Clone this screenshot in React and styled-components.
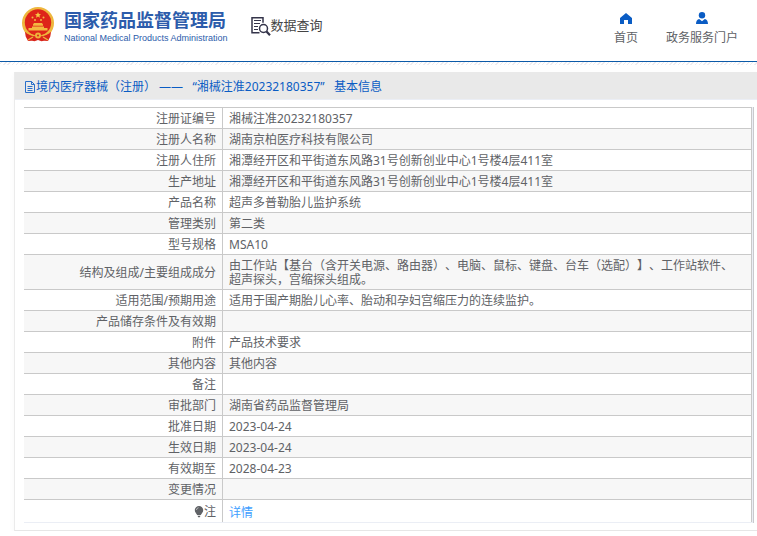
import React from "react";
import styled, { createGlobalStyle } from "styled-components";

const GlobalStyle = createGlobalStyle`
  body {
    margin: 0;
    background: #fff;
    color: #606266;
    font-family: "Noto Sans", "Noto Sans CJK SC", sans-serif;
    font-size: 12px;
    line-height: 14px;
    text-spacing-trim: space-all;
  }

  a {
    color: inherit;
    text-decoration: none;
  }
`;

const Header = styled.header`
  display: flex;
  align-items: flex-start;
  height: 61px;
  padding: 0 19px 0 22px;
  border-bottom: 1px solid #0c5aa8;
`;

const Hatch = styled.div`
  height: 3px;
  background: repeating-linear-gradient(
    135deg,
    #fff 0 1px,
    #eeecf0 1px 2px,
    #fff 2px 3px
  );
`;

const Brand = styled.a`
  display: flex;
  gap: 10px;
  padding-top: 7px;
  color: #2c5cab;
`;

const BrandText = styled.span`
  display: flex;
  flex-direction: column;
  padding-top: 2px;
`;

const BrandName = styled.strong`
  font-size: 18px;
  line-height: 22px;
  font-weight: 700;
`;

const BrandEnglish = styled.span`
  font-family: "Liberation Sans", sans-serif;
  font-size: 9px;
  line-height: 14px;
`;

const QueryLink = styled.a`
  display: flex;
  margin-left: 23px;
  padding-top: 16px;
  color: #444;
  font-size: 13px;
  line-height: 18px;
`;

const Nav = styled.nav`
  display: flex;
  gap: 28px;
  margin-left: auto;
  padding-top: 12px;
`;

const NavLink = styled.a`
  display: flex;
  flex-direction: column;
  align-items: center;
  gap: 6px;

  svg {
    fill: #0a5cc4;
  }
`;

const Panel = styled.main`
  margin: 7px 0 0 14px;
  border-left: 1px solid #ebebeb;
  border-bottom: 1px solid #e6e6e6;
  box-shadow: 0 2px 6px rgba(0, 0, 0, 0.03);
`;

const Title = styled.h1`
  display: flex;
  align-items: center;
  height: 25px;
  margin: 0;
  padding: 2px 10px 0;
  border-bottom: 1px solid #ebeef5;
  background: #e9e9e9;
  color: #0a5cc4;
  font-size: 12px;
  font-weight: 400;
  white-space: pre;
`;

const TableFrame = styled.div`
  margin: 7px 3px 7px 9px;
  padding-right: 1px;
  border-right: 1px solid #c9c9cd;
  background: #ebeef5;
`;

const Table = styled.table`
  width: 100%;
  border-spacing: 0;
  border-bottom: 1px solid #ebeef5;
  background: #fff;
  table-layout: fixed;
`;

const Row = styled.tr`
  &:nth-child(even) {
    background: #f7f7f7;
  }
`;

const Label = styled.th`
  width: 192px;
  height: 14px;
  padding: 4px 6px 2px 0;
  border-top: 1px solid #c9c9c9;
  border-right: 1px solid #c9c9c9;
  font-weight: 400;
  text-align: right;
`;

const Value = styled.td`
  padding: 4px 10px 2px 6px;
  border-top: 1px solid #c9c9c9;
  border-right: 1px solid #c9c9c9;
`;

const NoteLabel = styled.span`
  display: flex;
  align-items: center;
  justify-content: flex-end;
  height: 16px;
`;

const DetailLink = styled.a`
  display: block;
  padding-top: 2px;
  color: #409eff;
`;

const rows = [
  ["注册证编号", "湘械注准20232180357"],
  ["注册人名称", "湖南京柏医疗科技有限公司"],
  ["注册人住所", "湘潭经开区和平街道东风路31号创新创业中心1号楼4层411室"],
  ["生产地址", "湘潭经开区和平街道东风路31号创新创业中心1号楼4层411室"],
  ["产品名称", "超声多普勒胎儿监护系统"],
  ["管理类别", "第二类"],
  ["型号规格", "MSA10"],
  [
    "结构及组成/主要组成成分",
    "由工作站【基台（含开关电源、路由器）、电脑、鼠标、键盘、台车（选配）】、工作站软件、超声探头，宫缩探头组成。"
  ],
  ["适用范围/预期用途", "适用于围产期胎儿心率、胎动和孕妇宫缩压力的连续监护。"],
  ["产品储存条件及有效期", ""],
  ["附件", "产品技术要求"],
  ["其他内容", "其他内容"],
  ["备注", ""],
  ["审批部门", "湖南省药品监督管理局"],
  ["批准日期", "2023-04-24"],
  ["生效日期", "2023-04-24"],
  ["有效期至", "2028-04-23"],
  ["变更情况", ""]
];

const Emblem = () => (
  <svg width="32" height="35" viewBox="0 0 32 35" aria-hidden="true">
    <circle cx="16" cy="16" r="16" fill="#eeb73d" />
    <circle cx="16" cy="15.5" r="13.2" fill="#de2419" />
    <path
      d="M16 5l.9 2 2.1.2-1.6 1.4.5 2.1-1.9-1.1-1.9 1.1.5-2.1L13 7.2l2.1-.2z"
      fill="#f6c844"
    />
    <g fill="#f3b840">
      <circle cx="10.5" cy="10.5" r="1" />
      <circle cx="21.5" cy="10.5" r="1" />
      <circle cx="13" cy="13" r="1" />
      <circle cx="19" cy="13" r="1" />
      <path d="M11 17.5l1-1.5h8l1 1.5v1.3H11zM10 19.5h12V21h3.500v2.500h-19V21H10z" />
    </g>
    <path
      d="M3 25l5 2.500c5 2 11 2 16 0l5-2.500-.7 4.600-2.300 4.400-4-.2-2.500.4L16 33l-3.500 1.200L10 33.800l-4 .2-2.300-4.400z"
      fill="#d9251b"
    />
    <path
      d="M4.500 25.500c3 2 5 3 8 3.200M27.500 25.500c-3 2-5 3-8 3.200M6 33l5-3M26 33l-5-3"
      stroke="#efb33b"
      strokeWidth="1.400"
      fill="none"
    />
    <circle cx="16" cy="28.500" r="3" fill="#efb33b" />
    <circle cx="16" cy="28.500" r="1" fill="#d9251b" />
  </svg>
);

const QueryIcon = () => (
  <svg
    width="20"
    height="21"
    viewBox="0 0 20 21"
    fill="none"
    stroke="#34344a"
    aria-hidden="true"
  >
    <path d="M8.500 16.800H1V1.700h11v5" strokeWidth="1.500" />
    <path d="M3 4.500h7M3 7.500h6M3 10.500h4M3 13.500h4" strokeWidth="1.200" />
    <circle cx="12.500" cy="12.500" r="4" strokeWidth="1.500" />
    <path d="M15.500 15.500l3.500 3.800" strokeWidth="2.200" />
  </svg>
);

const HomeIcon = () => (
  <svg width="12" height="13" viewBox="0 0 12 13" aria-hidden="true">
    <path d="M6 1l6 5v6H8V8H4v4H0V6z" />
  </svg>
);

const UserIcon = () => (
  <svg width="12" height="13" viewBox="0 0 12 13" aria-hidden="true">
    <circle cx="6" cy="3.300" r="3.200" />
    <path d="M0 12c0-3 1.300-4.500 3.200-4.900L6 9.300l2.800-2.200C10.700 7.500 12 9 12 12z" />
  </svg>
);

const DocIcon = () => (
  <svg
    width="11"
    height="12"
    viewBox="0 0 11 12"
    fill="none"
    stroke="#2a6fca"
    aria-hidden="true"
  >
    <path d="M.5.500h6l3 3v8h-9zM6.500.500v3h3M2.500 5.500h5M2.500 7.500h5M2.500 9.500h5" />
  </svg>
);

const BulbIcon = () => (
  <svg width="10" height="12" viewBox="0 0 10 12" aria-hidden="true">
    <path
      d="M5 0a4.200 4.200 0 0 1 4.200 4.200C9.200 6.400 7.500 7.300 6.800 9H3.200C2.500 7.300.8 6.400.8 4.200A4.200 4.200 0 0 1 5 0zM3.500 9.800h3L5.800 11.300H4.200z"
      fill="#606266"
    />
    <path d="M2.400 4A2.600 2.600 0 0 1 4.600 1.700" stroke="#d8d8d8" strokeWidth=".7" fill="none" />
  </svg>
);

function App() {
  return (
    <>
      <GlobalStyle />
      <Header>
        <Brand href="#">
          <Emblem />
          <BrandText>
            <BrandName>国家药品监督管理局</BrandName>
            <BrandEnglish>National Medical Products Administration</BrandEnglish>
          </BrandText>
        </Brand>
        <QueryLink href="#">
          <QueryIcon />
          数据查询
        </QueryLink>
        <Nav>
          <NavLink href="#">
            <HomeIcon />
            首页
          </NavLink>
          <NavLink href="#">
            <UserIcon />
            政务服务门户
          </NavLink>
        </Nav>
      </Header>
      <Hatch />
      <Panel>
        <Title>
          <DocIcon />
          境内医疗器械（注册） ——   “湘械注准20232180357”   基本信息
        </Title>
        <TableFrame>
          <Table>
            <tbody>
              {rows.map(([label, value]) => (
                <Row key={label}>
                  <Label scope="row">{label}</Label>
                  <Value>{value}</Value>
                </Row>
              ))}
              <Row>
                <Label scope="row">
                  <NoteLabel>
                    <BulbIcon />注
                  </NoteLabel>
                </Label>
                <Value>
                  <DetailLink href="#">详情</DetailLink>
                </Value>
              </Row>
            </tbody>
          </Table>
        </TableFrame>
      </Panel>
    </>
  );
}

export default App;
